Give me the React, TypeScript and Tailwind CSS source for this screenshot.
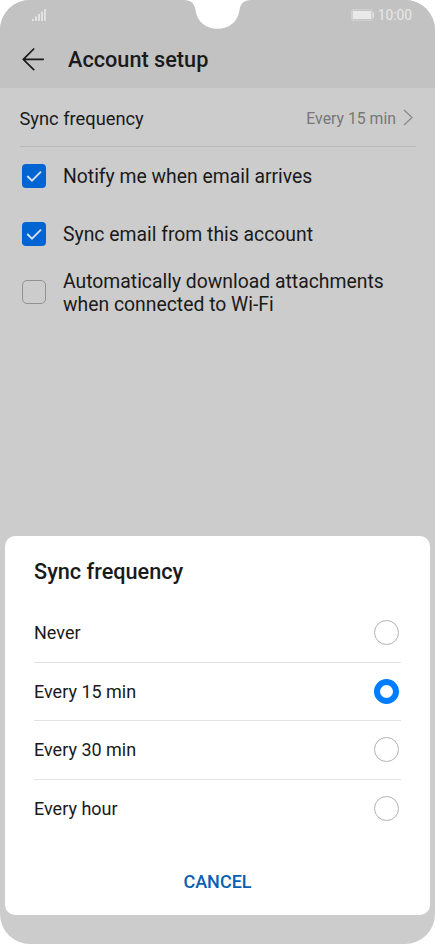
import React, { useState } from 'react';

const settings = [
  { id: 'notify', label: 'Notify me when email arrives' },
  { id: 'sync', label: 'Sync email from this account' },
  { id: 'wifi', label: 'Automatically download attachments when connected to Wi-Fi' },
];

const frequencies = ['Never', 'Every 15 min', 'Every 30 min', 'Every hour'];

function StatusBar() {
  return (
    <div className="relative flex h-[30px] shrink-0 items-center justify-between bg-[#c2c2c2] pl-8 pr-[23px]">
      {/* Camera notch */}
      <svg className="absolute left-[184px] top-0 h-[29px] w-[67px]" viewBox="0 0 67 29" fill="#fff">
        <path d="M0 0C7 0 10.5 3.5 11.5 10C13 22 22 28.7 33.5 28.7C45 28.7 54 22 55.5 10C56.5 3.5 60 0 67 0Z" />
      </svg>
      <svg className="h-3 w-[14px]" viewBox="0 0 14 12" fill="#e2e2e2">
        <path d="M0 10h2v2H0zM3 7.5h2V12H3zM6 5h2v7H6zM9 2.5h2V12H9zM12 0h1.8v12H12z" />
      </svg>
      <div className="flex items-center gap-1">
        <svg className="h-3 w-6" viewBox="0 0 24 12">
          <rect x="1.75" y="0.75" width="20.5" height="10.5" rx="1.5" fill="none" stroke="#d3d3d3" strokeWidth="1.2" />
          <rect x="2.8" y="2" width="18.4" height="8" fill="#e9e9e9" />
          <path d="M22.8 3.5h1.2v5h-1.2z" fill="#e4e4e4" />
        </svg>
        <span className="pt-px text-[13.8px] leading-none text-[#e8e8e8]">10:00</span>
      </div>
    </div>
  );
}

function Checkbox({ checked }: { checked: boolean }) {
  if (!checked) {
    return <span className="size-6 shrink-0 rounded-[5px] border border-[#919191]" />;
  }

  return (
    <span className="size-6 shrink-0 rounded-[4px] bg-[#0064d2]">
      <svg className="size-6" viewBox="0 0 24 24" fill="none" stroke="#d5e1ee" strokeWidth="1.9">
        <path d="M5.3 12L10 16.7L19 7.7" />
      </svg>
    </span>
  );
}

export default function App() {
  const [checked, setChecked] = useState<string[]>(['notify', 'sync']);
  const [frequency, setFrequency] = useState('Every 15 min');

  const toggle = (id: string) => {
    setChecked((prev) => (prev.includes(id) ? prev.filter((c) => c !== id) : [...prev, id]));
  };

  return (
    <div className="h-[944px] w-[435px] bg-white font-[Roboto,sans-serif] text-[#1a1a1a]">
      <div className="flex h-full flex-col overflow-hidden rounded-[30px] bg-[#cccccc]">
        <StatusBar />

        {/* Header */}
        <header className="flex h-[58px] shrink-0 items-center gap-6 bg-[#c2c2c2] pl-[22px]">
          <svg
            className="h-6 w-[22px]"
            viewBox="0 0 22 24"
            fill="none"
            stroke="#1a1a1a"
            strokeWidth="1.7"
            strokeLinecap="round"
            strokeLinejoin="round"
          >
            <path d="M11.7 2L1.3 12.3l10.4 10.3M1.3 12.3h20" />
          </svg>
          <h1 className="pt-[2px] text-[21.7px] font-medium">Account setup</h1>
        </header>

        {/* Account settings */}
        <main className="flex-1">
          <div className="ml-[19.5px] mr-[19px] flex h-[59px] items-center justify-between border-b border-[#b9b9b9]">
            <span className="pt-[3px] text-[18.3px]">Sync frequency</span>
            <div className="flex items-center gap-[7px] text-[#777]">
              <span className="pt-[3px] text-[15.8px]">Every 15 min</span>
              <svg className="mr-[3px] h-[17px] w-[10px]" viewBox="0 0 10 17" fill="none" stroke="#8b8b8b" strokeWidth="1.3">
                <path d="M1 1l8 7.5L1 16" />
              </svg>
            </div>
          </div>

          {settings.map((item) => (
            <button
              key={item.id}
              onClick={() => toggle(item.id)}
              className="flex h-[58px] w-full items-center gap-[17px] pl-[22px] pr-10 text-left"
            >
              <Checkbox checked={checked.includes(item.id)} />
              <span className="pt-px text-[19.35px] leading-[23px]">{item.label}</span>
            </button>
          ))}
        </main>

        {/* Frequency sheet */}
        <section className="mx-[5px] mb-[29px] flex h-[379px] shrink-0 flex-col rounded-[10px] bg-white px-[29px]">
          <h2 className="mt-5 text-[21.7px] font-medium leading-8">Sync frequency</h2>
          <div className="mt-4 divide-y divide-[#e3e3e3]">
            {frequencies.map((item) => (
              <button
                key={item}
                onClick={() => setFrequency(item)}
                className="flex h-[58.5px] w-full items-center justify-between pr-[2px] text-[18px]"
              >
                {item}
                <span
                  className={
                    frequency === item
                      ? 'size-[25px] rounded-full border-[6px] border-[#007dff]'
                      : 'size-[25px] rounded-full border border-[#b2b2b2]'
                  }
                />
              </button>
            ))}
          </div>
          <button className="mt-7 text-[18px] font-medium leading-8 text-[#0a5fb4]">CANCEL</button>
        </section>
      </div>
    </div>
  );
}
